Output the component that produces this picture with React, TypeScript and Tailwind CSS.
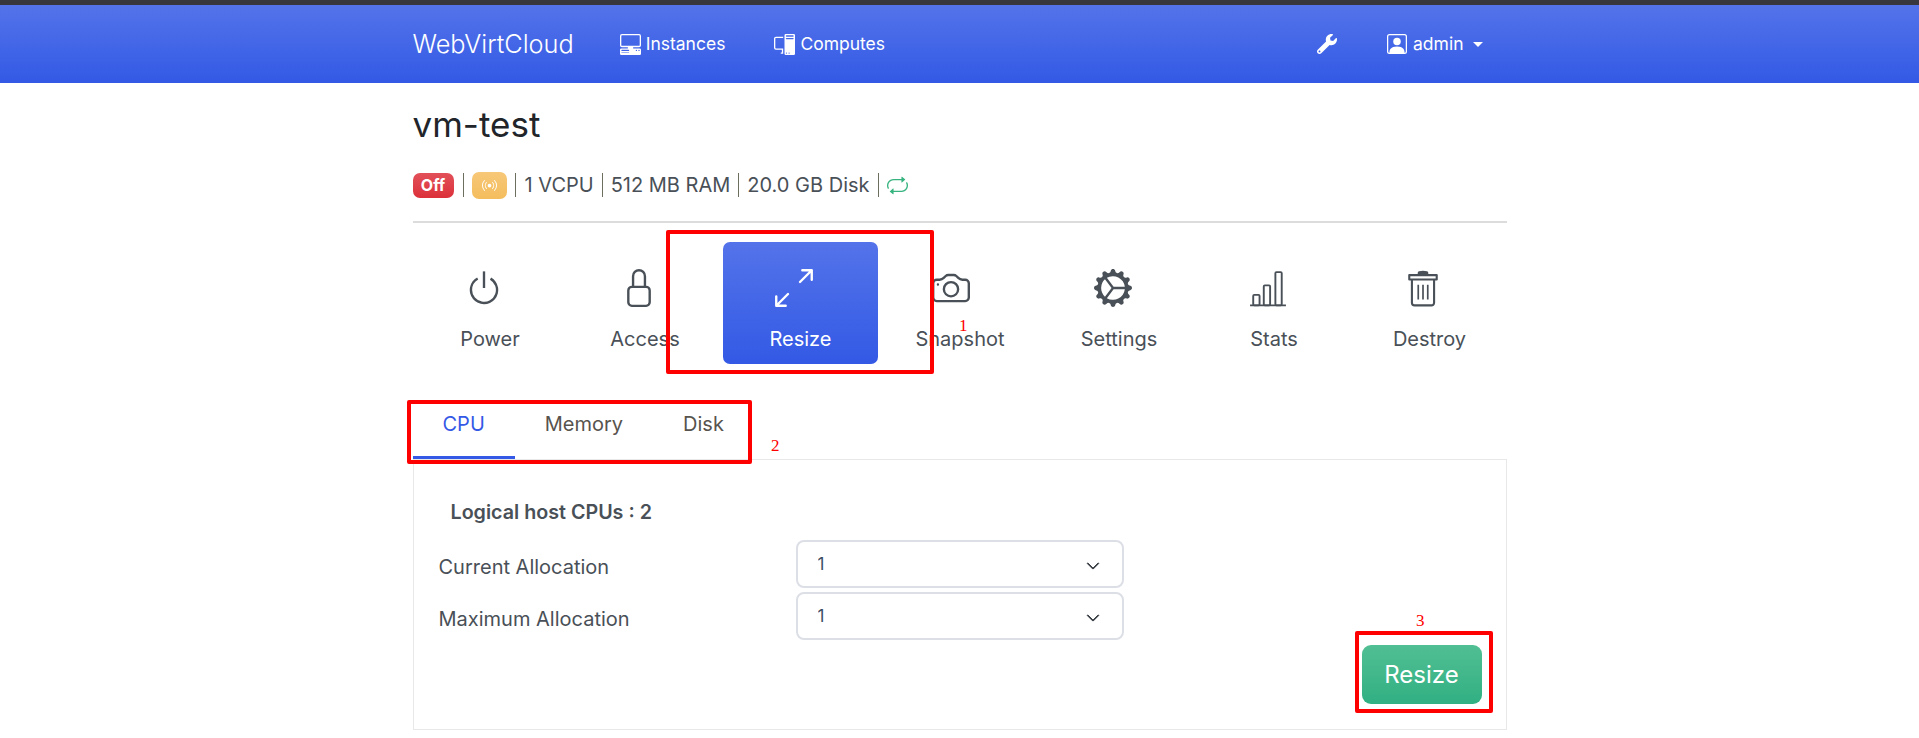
import React from "react";
import {
  BsArrowsAngleExpand,
  BsBroadcast,
  BsCamera,
  BsChevronDown,
  BsGearWideConnected,
  BsLock,
  BsPcDisplay,
  BsPcDisplayHorizontal,
  BsPersonSquare,
  BsPower,
  BsRepeat,
} from "react-icons/bs";
import { FaWrench } from "react-icons/fa";

const StatsIcon = ({ className }: { className?: string }) => (
  <svg viewBox="0 0 36 36" fill="none" stroke="currentColor" strokeWidth="1.8" className={className}>
    <path d="M1 34.5h34" />
    <rect x="4" y="24.5" width="6" height="10" rx="1" />
    <rect x="14" y="15.5" width="6" height="19" rx="1" />
    <rect x="25" y="3" width="6" height="31.5" rx="1" />
  </svg>
);

const TrashIcon = ({ className }: { className?: string }) => (
  <svg viewBox="0 0 36 36" fill="none" stroke="currentColor" strokeWidth="2" className={className}>
    <path d="M5 10V5.8h26V10z" strokeLinejoin="round" />
    <path d="M14 5V3.5c0-1 8-1 8 0V5" fill="currentColor" />
    <path d="M7.5 10v22a2.5 2.5 0 0 0 2.5 2.5h16a2.5 2.5 0 0 0 2.5-2.5V10" />
    <path d="M13.5 15v14M18 15v14M22.5 15v14" strokeWidth="1.6" />
  </svg>
);

const actions = [
  { label: "Power", icon: BsPower, iconClass: "mr-[12px]" },
  { label: "Access", icon: BsLock, iconClass: "mr-[12px]" },
  { label: "Resize", icon: BsArrowsAngleExpand, iconClass: "mr-[12px]", active: true },
  { label: "Snapshot", icon: BsCamera, iconClass: "mr-[17px]" },
  { label: "Settings", icon: BsGearWideConnected, iconClass: "mr-[12px]" },
  { label: "Stats", icon: StatsIcon, iconClass: "mr-[12px]" },
  { label: "Destroy", icon: TrashIcon, iconClass: "mr-[12px]" },
];

const Separator = () => <span className="mx-[8px] h-[24px] w-px bg-[#6c6f5e]" />;

const Mark = ({ className }: { className: string }) => (
  <div className={`pointer-events-none absolute rounded-[2px] border-[4px] border-[#ff0000] ${className}`} />
);

const Note = ({ className, children }: { className: string; children: React.ReactNode }) => (
  <span className={`absolute font-['Liberation_Serif',serif] text-[17px] leading-none text-[#ff0000] ${className}`}>
    {children}
  </span>
);

const AllocationRow = ({ label }: { label: string }) => (
  <div className="flex items-center">
    <label className="w-[357px] pt-[5px] text-[20px] text-[#495057]">{label}</label>
    <div className="relative w-[328px]">
      <select className="h-[48px] w-full appearance-none rounded-[8px] border-2 border-[#dcdfe6] bg-white pl-[20px] pt-[2px] text-[17px] text-[#3c4d63]">
        <option>1</option>
      </select>
      <BsChevronDown className="absolute right-[24px] top-[19px] text-[14px] text-[#343a40]" strokeWidth={1} />
    </div>
  </div>
);

export default function App() {
  return (
    <div className="relative min-h-[738px] overflow-hidden bg-white font-['Inter',sans-serif]">
      <div className="h-[5px] bg-[#37373d]" />
      <nav className="h-[78px] bg-gradient-to-b from-[#5473ea] to-[#3359e5] text-white">
        <div className="mx-auto flex h-full w-[1094px] items-center pr-[24px]">
          <span className="text-[25.3px] font-light leading-none">WebVirtCloud</span>
          <a className="ml-[46px] flex items-center gap-[5px] text-[17.5px]">
            <BsPcDisplayHorizontal className="text-[21px]" />
            Instances
          </a>
          <a className="ml-[49px] flex items-center gap-[5px] text-[17.5px]">
            <BsPcDisplay className="text-[21px]" />
            Computes
          </a>
          <FaWrench className="ml-auto text-[20px]" />
          <a className="ml-[50px] flex items-center gap-[6px] text-[17.5px]">
            <BsPersonSquare className="text-[20px]" />
            admin
            <span className="ml-[3px] border-x-[5px] border-t-[5px] border-x-transparent border-t-white" />
          </a>
        </div>
      </nav>

      <main className="mx-auto w-[1094px]">
        <h1 className="pt-[20px] text-[35px] font-normal leading-[42px] text-[#212529]">vm-test</h1>

        <div className="mt-[25px] flex h-[30px] items-center text-[20px] text-[#495057]">
          <span className="flex h-[25px] w-[41px] items-center justify-center rounded-[7px] bg-gradient-to-b from-[#e25058] to-[#dc2f3a] text-[16px] font-bold text-white">
            Off
          </span>
          <span className="ml-[9px] mr-[8px] h-[24px] w-px bg-[#6c6f5e]" />
          <span className="flex h-[27px] w-[35px] items-center justify-center rounded-[7px] bg-gradient-to-b from-[#f7c878] to-[#f4bd5d] text-white">
            <BsBroadcast className="text-[15px]" />
          </span>
          <span className="ml-[8px] mr-[9px] h-[24px] w-px bg-[#6c6f5e]" />
          1 VCPU
          <Separator />
          512 MB RAM
          <Separator />
          20.0 GB Disk
          <Separator />
          <BsRepeat className="text-[21px] text-[#36b37e]" />
        </div>

        <hr className="mt-[21px] border-t-2 border-[#dcdcdc]" />

        <div className="mt-[19px] grid grid-cols-[154px_156px_155px_164px_154px_156px_155px]">
          {actions.map(({ label, icon: Icon, iconClass, active }) => (
            <div
              key={label}
              className={`flex h-[122px] flex-col items-center rounded-[7px] pt-[27px] ${
                active ? "bg-gradient-to-b from-[#5473ea] to-[#3359e5] text-white" : "text-[#495057]"
              }`}
            >
              <Icon className={`h-[38px] w-[38px] ${iconClass}`} />
              <span className="ml-[1px] mt-[20px] text-[20px] leading-[24px]">{label}</span>
            </div>
          ))}
        </div>

        <div className="mt-[26px] flex h-[70px] items-start">
          <a className="h-[69px] border-b-[3px] border-[#3459e6] px-[30px] pt-[22px] text-[20px] leading-[24px] text-[#3459e6]">
            CPU
          </a>
          <a className="px-[30px] pt-[22px] text-[20px] leading-[24px] text-[#57534e]">Memory</a>
          <a className="px-[30px] pt-[22px] text-[20px] leading-[24px] text-[#57534e]">Disk</a>
        </div>

        <section className="-mt-[1px] h-[271px] border border-[#e8e8e8] pl-[25px] pr-[24px] pt-[38px]">
          <p className="pl-[12px] text-[19.7px] font-semibold leading-[28px] text-[#495057]">Logical host CPUs : 2</p>
          <div className="mt-[14px] flex flex-col gap-[4px]">
            <AllocationRow label="Current Allocation" />
            <AllocationRow label="Maximum Allocation" />
          </div>
          <div className="mt-[5px] flex justify-end">
            <button className="h-[59px] w-[120px] rounded-[9px] bg-gradient-to-b from-[#50bf93] to-[#30b083] text-[24px] text-white">
              Resize
            </button>
          </div>
        </section>
      </main>

      <Mark className="left-[666px] top-[230px] h-[144px] w-[268px]" />
      <Mark className="left-[407px] top-[400px] h-[64px] w-[345px]" />
      <Mark className="left-[1355px] top-[631px] h-[82px] w-[138px]" />
      <Note className="left-[959px] top-[317px]">1</Note>
      <Note className="left-[771px] top-[437px]">2</Note>
      <Note className="left-[1416px] top-[612px]">3</Note>
    </div>
  );
}
